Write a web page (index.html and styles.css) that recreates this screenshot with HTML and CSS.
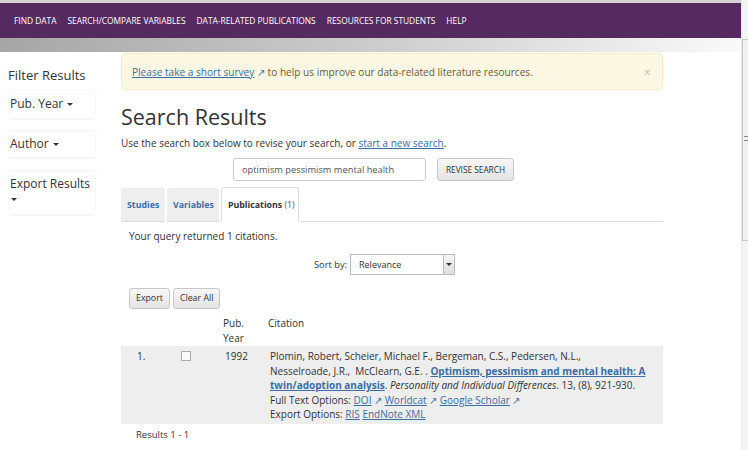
FILE: index.html
```html
<!DOCTYPE html>
<html>
<head>
<meta charset="utf-8">
<link rel="stylesheet" href="styles.css">
</head>
<body>
<div class="window">
  <div class="page">
    <div class="topstrip"></div>
    <nav class="nav">
      <span>Find Data</span>
      <span>Search/Compare Variables</span>
      <span>Data-related Publications</span>
      <span>Resources for Students</span>
      <span>Help</span>
    </nav>
    <div class="shade"></div>
    <div class="content">
      <aside class="sidebar">
        <h2 class="filter-title">Filter Results</h2>
        <div class="panel p-year">Pub. Year <span class="caret"></span></div>
        <div class="panel p-author">Author <span class="caret"></span></div>
        <div class="panel p-export">Export Results<br><span class="caret"></span></div>
      </aside>
      <main class="main">
        <div class="alert">
          <span><a href="#" class="alink">Please take a short survey</a> <span class="ext">&#8599;</span> to help us improve our data-related literature resources.</span>
          <span class="close">&times;</span>
        </div>
        <h1 class="title">Search Results</h1>
        <p class="intro">Use the search box below to revise your search, or <a href="#" class="link">start a new search</a>.</p>
        <div class="searchrow">
          <div class="input">optimism pessimism mental health</div>
          <div class="btn revise">REVISE SEARCH</div>
        </div>
        <div class="tabs">
          <div class="tab t-studies">Studies</div>
          <div class="tab t-vars">Variables</div>
          <div class="tab active"><span>Publications <span class="count">(1)</span></span></div>
          <div class="tabline"></div>
        </div>
        <div class="results">
          <p class="returned">Your query returned 1 citations.</p>
          <div class="sortrow">
            <span class="sortlabel">Sort by:</span>
            <div class="select"><span>Relevance</span><span class="sel-arrow"><span class="tri"></span></span></div>
          </div>
          <div class="btnrow">
            <div class="btn small">Export</div>
            <div class="btn small">Clear All</div>
          </div>
          <div class="thead">
            <span></span><span></span><span>Pub.<br>Year</span><span>Citation</span>
          </div>
          <div class="trow">
            <span>1.</span>
            <span><span class="checkbox"></span></span>
            <span>1992</span>
            <span class="cite">Plomin, Robert, Scheier, Michael F., Bergeman, C.S., Pedersen, N.L.,<br>Nesselroade, J.R.,&nbsp; McClearn, G.E. . <a href="#" class="boldlink">Optimism, pessimism and mental health: A twin/adoption analysis</a>. <i>Personality and Individual Differences</i>. 13, (8), 921-930.<br>Full Text Options: <a href="#" class="link">DOI</a> <span class="ext">&#8599;</span> <a href="#" class="link">Worldcat</a> <span class="ext">&#8599;</span> <a href="#" class="link">Google Scholar</a> <span class="ext">&#8599;</span><br>Export Options: <a href="#" class="link">RIS</a> <a href="#" class="link">EndNote XML</a></span>
          </div>
          <div class="footer">Results 1 - 1</div>
        </div>
      </main>
    </div>
  </div>
  <div class="scrollbar"><div class="thumb"><span class="grip"></span></div></div>
</div>
</body>
</html>
```

FILE: styles.css
```css
html, body { margin: 0; padding: 0; background: #fff; }
body { font-family: "Open Sans", "Noto Sans", sans-serif; color: #333; font-size: 11px; }
.window { display: flex; width: 748px; height: 450px; overflow: hidden; }
.page { width: 741px; display: flex; flex-direction: column; }
.page > * { flex-shrink: 0; }
.topstrip { height: 3px; background: #d4d2d4; }
.nav { height: 35px; background: #552a60; display: flex; align-items: center; gap: 11px; padding-left: 14px; color: #fff; font-size: 8.4px; text-transform: uppercase; }
.shade { height: 14px; background: linear-gradient(to right, #a6a6a6, #d0d0d0 55%, #fafafa); }
.content { display: flex; padding-left: 8px; }
.sidebar { width: 88px; margin-right: 25px; }
.filter-title { font-size: 13px; font-weight: normal; margin: 14px 0 0 0; line-height: 18px; color: #333; }
.panel { font-size: 12px; line-height: 16px; padding: 6px 1px 6px 1px; box-shadow: 0 1px 2px rgba(0,0,0,0.05); border: 1px solid #f7f7f7; border-radius: 3px; color: #333; }
.p-year { margin-top: 5px; }
.p-author { margin-top: 11px; padding-top: 5px; padding-bottom: 5px; }
.p-export { margin-top: 12px; padding-top: 5px; padding-bottom: 8px; line-height: 15px; }
.caret { display: inline-block; width: 0; height: 0; border-left: 3px solid transparent; border-right: 3px solid transparent; border-top: 3px solid #333; vertical-align: middle; margin-left: 1px; }
.main { width: 542px; }
.alert { margin-top: 1px; height: 37px; box-sizing: border-box; background: #fcf8e3; border: 1px solid #faebcc; border-radius: 4px; display: flex; align-items: center; justify-content: space-between; padding: 0 11px 0 10px; color: #6b5b3b; font-size: 10.1px; }
.alink { color: #3a6ea5; text-decoration: underline; }
.ext { color: #3a6ea5; font-size: 10px; }
.close { color: #c9c3ae; font-size: 13px; }
.title { font-size: 21.5px; font-weight: normal; margin: 12px 0 0 0; line-height: 30px; color: #333; }
.intro { margin: 3px 0 0 0; line-height: 16px; font-size: 10px; }
.link { color: #3a6ea5; text-decoration: underline; }
.searchrow { display: flex; margin: 7px 0 0 112px; gap: 11px; }
.input { width: 193px; height: 23px; box-sizing: border-box; border: 1px solid #ccc; border-radius: 3px; padding: 0 8px; font-size: 9.3px; line-height: 21px; color: #555; }
.btn { box-sizing: border-box; border: 1px solid #c8c8c8; border-radius: 3px; background: linear-gradient(#f7f7f7, #e4e4e4); color: #333; text-align: center; }
.revise { width: 77px; height: 23px; line-height: 21px; font-size: 8.3px; }
.tabs { display: flex; margin-top: 6px; height: 35px; align-items: flex-end; }
.tab { height: 34px; box-sizing: border-box; background: #eee; border-radius: 3px 3px 0 0; margin-right: 2px; font-size: 8.8px; font-weight: bold; color: #3a6ea5; display: flex; align-items: center; padding: 0 5px; border: 1px solid #eee; border-bottom-color: #ddd; white-space: nowrap; }
.t-studies { width: 44px; }
.t-vars { width: 52px; }
.tab.active { width: 78px; height: 35px; background: #fff; color: #333; border: 1px solid #ddd; border-bottom-color: #fff; padding-left: 6px; }
.count { font-weight: normal; color: #555; }
.tabline { flex: 1; border-bottom: 1px solid #ddd; }
.returned { margin: 7px 0 0 8px; line-height: 14px; font-size: 10px; }
.sortrow { display: flex; align-items: center; margin: 11px 0 0 193px; gap: 3px; font-size: 9.3px; }
.select { width: 105px; height: 21px; box-sizing: border-box; border: 1px solid #bbb; display: flex; justify-content: space-between; align-items: stretch; font-size: 9px; }
.select > span:first-child { padding-left: 8px; line-height: 19px; }
.sel-arrow { width: 10px; background: linear-gradient(#f5f5f5, #ddd); border-left: 1px solid #bbb; display: flex; align-items: center; justify-content: center; }
.tri { width: 0; height: 0; border-left: 3px solid transparent; border-right: 3px solid transparent; border-top: 3px solid #333; }
.btnrow { display: flex; gap: 3px; margin: 13px 0 0 8px; }
.small { height: 21px; line-height: 19px; font-size: 8.8px; padding: 0 6px; }
.thead { display: grid; grid-template-columns: 44px 44px 45px 1fr; padding-left: 14px; margin-top: 7px; line-height: 15px; font-size: 10px; }
.trow { display: grid; grid-template-columns: 44px 44px 45px 1fr; padding: 3px 10px 2px 16px; margin-top: 0; background: #eee; line-height: 14.5px; font-size: 10px; }
.checkbox { display: inline-block; width: 8px; height: 8px; border: 1px solid #aaa; background: #fafafa; vertical-align: middle; margin-top: -2px; }
.cite { color: #333; }
.boldlink { color: #3a6ea5; font-weight: bold; text-decoration: underline; }
.footer { padding: 4px 0 0 15px; font-size: 9.5px; line-height: 14px; }
.scrollbar { width: 7px; background: #f4f4f4; border-left: 1px solid #e8e8e8; box-sizing: border-box; padding-top: 39px; }
.thumb { height: 200px; border: 1px solid #c8c8c8; border-right: none; background: #f0f0f0; position: relative; }
.grip { position: absolute; left: 1px; top: 96px; width: 4px; height: 5px; border-top: 1px solid #888; border-bottom: 1px solid #888; box-sizing: border-box; }
```
